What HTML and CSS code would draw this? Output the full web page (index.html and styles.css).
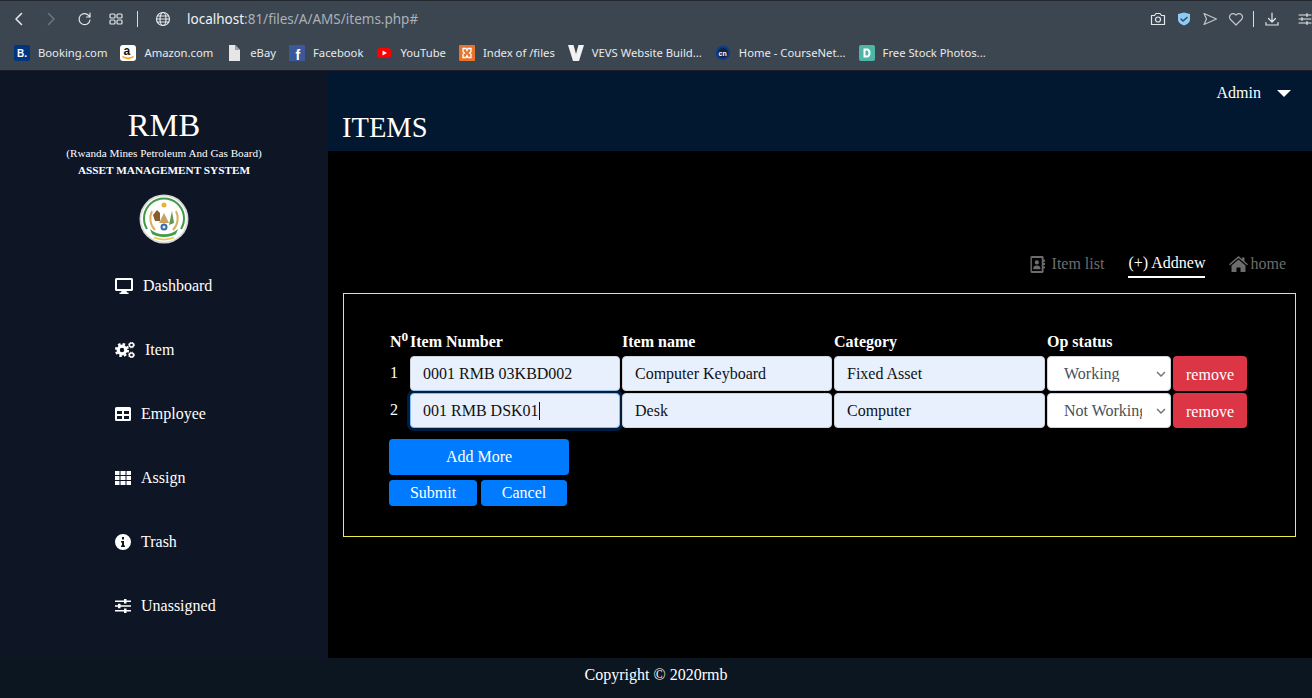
FILE: index.html
```html
<!DOCTYPE html>
<html lang="en">
<head>
  <meta charset="UTF-8">
  <title>Items</title>
  <link rel="stylesheet" href="styles.css">
</head>
<body>
  <div class="browser">
    <div class="toolbar">
      <div class="tool-left">
        <svg class="tb-ico" viewBox="0 0 16 16"><path d="M10.5 2.5 5 8l5.5 5.5" class="ln"/></svg>
        <svg class="tb-ico dim" viewBox="0 0 16 16"><path d="M5.5 2.5 11 8l-5.5 5.5" class="ln"/></svg>
        <svg class="tb-ico reload" viewBox="0 0 16 16"><path d="M13 9a5.5 5.5 0 1 1-1.4-4.6L13 6V2M13 6H9.5" class="ln thin"/></svg>
        <svg class="tb-ico apps" viewBox="0 0 16 16"><g class="ln thin"><rect x="2" y="3" width="5" height="4" rx="1"/><rect x="9" y="3" width="5" height="4" rx="1"/><rect x="2" y="9" width="5" height="4" rx="1"/><rect x="9" y="9" width="5" height="4" rx="1"/></g></svg>
        <span class="tb-sep"></span>
        <svg class="tb-ico globe" viewBox="0 0 16 16"><g class="ln thin"><circle cx="8" cy="8" r="6.5"/><ellipse cx="8" cy="8" rx="3" ry="6.5"/><path d="M1.5 8h13M2.5 5h11M2.5 11h11"/></g></svg>
        <span class="url"><b>localhost</b>:81/files/A/AMS/items.php#</span>
      </div>
      <div class="tool-right">
        <svg class="tb-ico" viewBox="0 0 16 16"><g class="ln thin"><path d="M1.5 4.5h3L6 2.500h4l1.500 2h3v9h-13z"/><circle cx="8" cy="8.500" r="2.500"/></g></svg>
        <svg class="tb-ico" viewBox="0 0 16 16"><path d="M8 1.500 14 3v5.500c0 3-3 5-6 6-3-1-6-3-6-6V3z" fill="#8ccbf7"/><path d="M5 8l2 2 4-3.500" class="ln check"/></svg>
        <svg class="tb-ico" viewBox="0 0 16 16"><path d="M2 2.500 14.500 8 2 13.500 4.500 8z" class="ln thin grey"/></svg>
        <svg class="tb-ico" viewBox="0 0 16 16"><path d="M8 14 2.500 8.500a3.300 3.300 0 0 1 0-4.800 3.500 3.500 0 0 1 5 0l.5.500.5-.5a3.500 3.500 0 0 1 5 0 3.300 3.300 0 0 1 0 4.800z" class="ln thin grey"/></svg>
        <span class="tb-sep"></span>
        <svg class="tb-ico download" viewBox="0 0 16 16"><path d="M8 2v8.500M4.500 7.500 8 11l3.500-3.500M2 11.500V14h12v-2.500" class="ln thin"/></svg>
        <svg class="tb-ico sliders" viewBox="0 0 16 16"><path d="M2 4h12M2 8h12M2 12h12M10 2.500v3M5 6.500v3M10 10.500v3" class="ln thin"/></svg>
      </div>
    </div>
    <div class="bookmarks">
      <span class="bm"><svg viewBox="0 0 16 16"><rect width="16" height="16" rx="2" fill="#003580"/><text x="3" y="12" class="fav-txt">B.</text></svg>Booking.com</span>
      <span class="bm"><svg viewBox="0 0 16 16"><rect width="16" height="16" rx="3" fill="#fff"/><text x="3.500" y="10" class="fav-txt dark">a</text><path d="M2.500 11.500c3 2.500 8 2.500 11 0" stroke="#f90" stroke-width="1.600" fill="none"/></svg>Amazon.com</span>
      <span class="bm"><svg viewBox="0 0 16 16"><path d="M3 0h6l5 5v11H3z" fill="#e6e6e6"/><path d="M9 0l5 5H9z" fill="#9aa0a6"/></svg>eBay</span>
      <span class="bm"><svg viewBox="0 0 16 16"><rect width="16" height="16" fill="#3b5998"/><text x="6.500" y="14.500" class="fav-txt big">f</text></svg>Facebook</span>
      <span class="bm"><svg viewBox="0 0 16 16"><rect x="1" y="3" width="14" height="10" rx="3" fill="#f00"/><path d="M6.500 5.500 11 8l-4.500 2.500z" fill="#fff"/></svg>YouTube</span>
      <span class="bm"><svg viewBox="0 0 16 16"><rect width="16" height="16" rx="1" fill="#e8742a"/><path d="M4 3.500h3l1 2 1-2h3v3.300L10.500 8l1.500 1.200v3.300H9l-1-2-1 2H4V9.200L5.500 8 4 6.800z" fill="none" stroke="#fff" stroke-width="1.300"/></svg>Index of /files</span>
      <span class="bm"><svg viewBox="0 0 16 16"><path d="M0 0h5.500L8 9l2.500-9H16l-5 16H5z" fill="#f2f2f2"/></svg>VEVS Website Build...</span>
      <span class="bm"><svg viewBox="0 0 16 16"><circle cx="8" cy="8" r="7.200" fill="#0b3a8a"/><circle cx="8" cy="8" r="5" fill="#10233f"/><text x="3.500" y="10.500" class="fav-txt small">cn</text></svg>Home - CourseNet...</span>
      <span class="bm"><svg viewBox="0 0 16 16"><rect width="16" height="16" rx="2" fill="#4db6a5"/><path d="M4.500 3.500h4a3.500 4.500 0 0 1 3 4.500 3.500 4.500 0 0 1-3 4.500h-4z" fill="#fff"/><path d="M6.500 5.500h1.700a1.500 2.500 0 0 1 1.300 2.500 1.500 2.500 0 0 1-1.300 2.500H6.500z" fill="#4db6a5"/></svg>Free Stock Photos...</span>
    </div>
  </div>

  <div class="app">
    <aside class="sidebar">
      <div class="brand">
        <div class="brand-name">RMB</div>
        <div class="brand-sub">(Rwanda Mines Petroleum And Gas Board)</div>
        <div class="brand-sys">ASSET MANAGEMENT SYSTEM</div>
        <svg class="emblem" viewBox="0 0 50 50">
          <circle cx="25" cy="25" r="24.500" fill="#d8d8d8"/>
          <circle cx="25" cy="25" r="22.800" fill="#fff"/>
          <path d="M8 35A20 20 0 1 1 42 35" fill="none" stroke="#3f9b45" stroke-width="2"/>
          <circle cx="25" cy="11" r="2.500" fill="#e8b23a"/>
          <path d="M13 17c-3 6-2 14 3 19M37 17c3 6 2 14-3 19" fill="none" stroke="#d8b060" stroke-width="2"/>
          <path d="M14 21l4-5 3 3v8h-5z" fill="#8a5a2b"/>
          <path d="M20 29l5-10 5 10z" fill="#c8a060"/>
          <path d="M33 17l2 12-5 2z" fill="#5c9a52"/>
          <circle cx="25" cy="33" r="3.500" fill="#2f6db0"/>
          <circle cx="25" cy="33" r="1.500" fill="#e8e8e8"/>
          <path d="M11 35c7 7 21 7 28 0l-2 5c-7 4-17 4-24 0z" fill="#3f9b45"/>
          <path d="M15 43.500c6 2.500 14 2.500 20 0" fill="none" stroke="#e8c84a" stroke-width="1.800"/>
        </svg>
      </div>
      <nav class="nav">
        <a class="nav-item"><svg class="ico w18" viewBox="0 0 18 16"><path d="M1.500 0h15A1.500 1.500 0 0 1 18 1.500v10a1.500 1.500 0 0 1-1.500 1.500H11.500l.5 1.500h1.500v1.500h-9v-1.500H6l.5-1.500h-5A1.500 1.500 0 0 1 0 11.500v-10A1.500 1.500 0 0 1 1.500 0zM2 2v9h14V2z" fill-rule="evenodd"/></svg>Dashboard</a>
        <a class="nav-item"><svg class="ico w20" viewBox="0 0 20 16">
          <circle cx="7" cy="8" r="3.800" class="gear-body"/>
          <circle cx="7" cy="8" r="6" class="gear-teeth"/>
          <circle cx="16.500" cy="3" r="2" class="gear-small"/>
          <circle cx="16.500" cy="13" r="2" class="gear-small"/>
          <circle cx="16.500" cy="3" r="2.900" class="gear-small-teeth"/>
          <circle cx="16.500" cy="13" r="2.900" class="gear-small-teeth"/>
        </svg>Item</a>
        <a class="nav-item"><svg class="ico w16" viewBox="0 0 16 14"><path d="M1.500 0h13A1.500 1.500 0 0 1 16 1.500v11a1.500 1.500 0 0 1-1.500 1.500h-13A1.500 1.500 0 0 1 0 12.500v-11A1.500 1.500 0 0 1 1.500 0zM2 4v3h5V4zm7 0v3h5V4zm-7 5v3h5V9zm7 0v3h5V9z" fill-rule="evenodd"/></svg>Employee</a>
        <a class="nav-item"><svg class="ico w16" viewBox="0 0 16 14"><path d="M0 0h4.500v4H0zM5.500 0h5v4h-5zM11.500 0H16v4h-4.500zM0 5h4.500v4H0zM5.500 5h5v4h-5zM11.500 5H16v4h-4.500zM0 10h4.500v4H0zM5.500 10h5v4h-5zM11.500 10H16v4h-4.500z"/></svg>Assign</a>
        <a class="nav-item"><svg class="ico w16" viewBox="0 0 16 16"><path d="M8 0a8 8 0 1 1 0 16A8 8 0 0 1 8 0zM7 3v2.500h2V3zM6 7v1.500h1v3H6V13h4v-1.500H9V7z" fill-rule="evenodd"/></svg>Trash</a>
        <a class="nav-item"><svg class="ico w16" viewBox="0 0 16 14"><path d="M0 1.500h9V0h2.500v1.500H16v1.500h-4.500v1.500H9V3H0zM0 6.250h3V4.800h2.500v1.450H16v1.500H5.500V9.200H3V7.750H0zM0 11h9V9.500h2.500V11H16v1.500h-4.500V14H9v-1.500H0z"/></svg>Unassigned</a>
      </nav>
    </aside>

    <div class="content">
      <header class="topbar">
        <div class="admin">Admin<span class="caret"></span></div>
        <h1>ITEMS</h1>
      </header>
      <main class="main">
        <div class="tabs">
          <a class="tab"><svg class="tab-ico" viewBox="0 0 16 18"><path d="M2 0h11a1.500 1.500 0 0 1 1.500 1.500V4H16v2h-1.500v1.500H16v2h-1.500V11H16v2h-1.500v3.500A1.500 1.500 0 0 1 13 18H2a1.500 1.500 0 0 1-1.500-1.500v-15A1.500 1.500 0 0 1 2 0zm0 2v14h10.500V2zm5.300 2.500a2.300 2.300 0 1 1 0 4.600 2.300 2.300 0 0 1 0-4.600zM3.500 13c0-2 1.500-3 3.800-3s3.800 1 3.800 3v1h-7.600z" fill-rule="evenodd"/></svg>Item list</a>
          <a class="tab active">(+) Addnew</a>
          <a class="tab home"><svg class="tab-ico wide" viewBox="0 0 19 16"><path d="M9.500 0 13 3V1.500h2.500v3.700L19 8.200l-1 1.100-8.500-7.300L1 9.300 0 8.200zM9.500 3.500 16.500 9.500V16H11.500v-4.500h-4V16H2.500V9.500z"/></svg>home</a>
        </div>
        <form class="form-box">
          <div class="item-grid">
            <div class="hd no">N<sup>0</sup></div>
            <div class="hd">Item Number</div>
            <div class="hd">Item name</div>
            <div class="hd">Category</div>
            <div class="hd">Op status</div>
            <div></div>

            <div class="num">1</div>
            <input class="field" type="text" value="0001 RMB 03KBD002">
            <input class="field" type="text" value="Computer Keyboard">
            <input class="field" type="text" value="Fixed Asset">
            <select class="status"><option>Working</option></select>
            <button type="button" class="btn-remove">remove</button>

            <div class="num">2</div>
            <div class="field focused">001 RMB DSK01<span class="cursor"></span></div>
            <input class="field" type="text" value="Desk">
            <input class="field" type="text" value="Computer">
            <select class="status"><option>Not Working</option></select>
            <button type="button" class="btn-remove">remove</button>
          </div>
          <button type="button" class="btn-blue btn-add">Add More</button>
          <div class="form-btns">
            <button type="button" class="btn-blue btn-submit">Submit</button>
            <button type="button" class="btn-blue btn-cancel">Cancel</button>
          </div>
        </form>
      </main>
    </div>
  </div>

  <footer class="footer">Copyright © 2020rmb</footer>
</body>
</html>
```

FILE: styles.css
```css
* { box-sizing: border-box; }

html, body {
  margin: 0;
  height: 698px;
  overflow: hidden;
}

body {
  font-family: "Liberation Serif", serif;
  font-size: 16px;
  color: white;
  background: #000;
  display: flex;
  flex-direction: column;
}

/* browser chrome */
.browser {
  height: 71px;
  background: #3b4651;
  border-top: 1px solid #23282e;
  border-bottom: 1px solid #1c2026;
  font-family: "Noto Sans", sans-serif;
  color: #e8eaed;
}

.toolbar {
  height: 36px;
  display: flex;
  align-items: center;
  justify-content: space-between;
  padding-left: 11px;
}

.tool-left, .tool-right {
  display: flex;
  align-items: center;
}

.tb-ico {
  width: 16px;
  height: 16px;
  margin-right: 16px;
  flex: none;
}

.tb-ico.reload { margin-left: 2px; margin-right: 15px; }
.tb-ico.apps { margin-right: 13px; }
.tb-ico.globe { margin-right: 16px; }

.tool-right .tb-ico { margin-right: 10px; }
.tool-right .download { margin-right: 17px; }
.tool-right .sliders { margin-right: -1px; }

.ln {
  fill: none;
  stroke: #e4e7ea;
  stroke-width: 1.6;
  stroke-linecap: round;
  stroke-linejoin: round;
}
.ln.thin { stroke-width: 1.2; }
g.ln { stroke-width: 1.2; }
.ln.grey { stroke: #c2c6ca; }
.ln.check { stroke: #3b4651; stroke-width: 1.5; }
.dim .ln { stroke: #6b747d; }

.tb-sep {
  width: 1px;
  height: 16px;
  background: #d8dbde;
  margin-right: 17px;
}

.tool-right .tb-sep { margin: 0 10px 0 -1px; }

.url {
  font-size: 13.5px;
  color: #aab1b8;
}
.url b { font-weight: normal; color: #f1f3f4; }

.bookmarks {
  height: 32px;
  display: flex;
  align-items: center;
  padding: 0 0 1px 14px;
  font-size: 11.25px;
  gap: 13px;
}

.bm {
  display: flex;
  align-items: center;
  gap: 8px;
  white-space: nowrap;
}

.bm svg { width: 16px; height: 16px; flex: none; }

.fav-txt {
  font: bold 10px "Liberation Sans", sans-serif;
  fill: #fff;
}
.fav-txt.dark { fill: #111; font-size: 12px; }
.fav-txt.big { font-size: 14px; }
.fav-txt.small { font-size: 7px; }

/* app */
.app {
  flex: 1;
  display: flex;
  min-height: 0;
}

.sidebar {
  width: 328px;
  flex: none;
  background: #0e1525;
}

.brand {
  display: flex;
  flex-direction: column;
  align-items: center;
}

.brand-name {
  font-size: 32.5px;
  line-height: 38px;
  margin-top: 35px;
}

.brand-sub {
  font-size: 11.2px;
  line-height: 14px;
  margin-top: 2px;
}

.brand-sys {
  font-size: 11.25px;
  font-weight: bold;
  line-height: 14px;
  margin-top: 3px;
}

.emblem {
  width: 50px;
  height: 50px;
  margin-top: 17px;
}

.nav {
  display: flex;
  flex-direction: column;
  margin-top: 10px;
}

.nav-item {
  height: 64px;
  display: flex;
  align-items: center;
  gap: 10px;
  padding-left: 115px;
  font-size: 16px;
}

.ico { fill: white; flex: none; }
.w18 { width: 18px; height: 16px; }
.w20 { width: 20px; height: 16px; }
.w16 { width: 16px; height: 16px; }

.gear-body, .gear-small, .gear-teeth, .gear-small-teeth { fill: none; stroke: white; }
.gear-body { stroke-width: 3.2; }
.gear-teeth { stroke-width: 2.2; stroke-dasharray: 2.5 2.2; }
.gear-small { stroke-width: 1.4; }
.gear-small-teeth { stroke-width: 1; stroke-dasharray: 1.3 1; }

.content {
  flex: 1;
  display: flex;
  flex-direction: column;
  min-width: 0;
}

.topbar {
  height: 80px;
  background: #021730;
  padding: 13px 21px 0 14px;
  display: flex;
  flex-direction: column;
}

.admin {
  align-self: flex-end;
  font-size: 16px;
  line-height: 18px;
  display: flex;
  align-items: center;
}

.caret {
  width: 0;
  height: 0;
  border-left: 7px solid transparent;
  border-right: 7px solid transparent;
  border-top: 7px solid white;
  margin-left: 16px;
}

h1 {
  font-size: 28.5px;
  font-weight: normal;
  line-height: 34px;
  margin: 9px 0 0;
}

.main {
  flex: 1;
  background: #000;
  padding: 0 16px 0 15px;
}

.tabs {
  display: flex;
  justify-content: flex-end;
  align-items: flex-start;
  gap: 24px;
  margin-top: 99px;
  padding-right: 10px;
  height: 43px;
}

.tab {
  font-size: 16px;
  color: #6c6c6c;
  display: flex;
  align-items: center;
  height: 28px;
  white-space: nowrap;
}

.tab.active {
  color: white;
  border-bottom: 2px solid white;
}

.tab-ico {
  width: 15px;
  height: 17px;
  fill: #6c6c6c;
  margin-right: 7px;
}

.tab-ico.wide { width: 19px; height: 16px; margin-right: 2px; }

.form-box {
  border: 1px solid #ecec4a;
  height: 244px;
  padding: 38px 45px 0;
}

.item-grid {
  display: grid;
  grid-template-columns: 19px 210px 210px 211px 124px 74px;
  grid-template-rows: 22px 35px 35px;
  gap: 2px;
}

.hd {
  font-weight: bold;
  font-size: 16px;
  line-height: 20px;
  white-space: nowrap;
}

.hd sup { line-height: 0; }
.no { padding-left: 1px; }

.num {
  font-size: 16px;
  padding: 8px 0 0 1px;
}

.field {
  font: 16px "Liberation Serif", serif;
  background: #e8f0fe;
  color: #111;
  border: 1px solid #ced4da;
  border-radius: 4px;
  padding: 0 12px;
  width: 100%;
  height: 35px;
  line-height: 33px;
  outline: none;
}

.field.focused {
  border-color: #80bdff;
  box-shadow: 0 0 0 3px rgba(0,123,255,.25);
}

.cursor {
  display: inline-block;
  width: 1px;
  height: 18px;
  background: #111;
  vertical-align: -4px;
}

.status {
  font: 16px "Liberation Serif", serif;
  color: #495057;
  background: white url("data:image/svg+xml,%3Csvg xmlns='http://www.w3.org/2000/svg' width='10' height='6'%3E%3Cpath d='M1 1l4 4 4-4' fill='none' stroke='%23777' stroke-width='1.500'/%3E%3C/svg%3E") no-repeat right 4px center;
  border: 1px solid #ced4da;
  border-radius: 4px;
  padding: 0 28px 0 16px;
  width: 100%;
  height: 35px;
  appearance: none;
}

.btn-remove {
  font: 16px "Liberation Serif", serif;
  background: #dc3545;
  color: white;
  border: none;
  border-radius: 4px;
  padding: 3px 0 0;
}

.btn-blue {
  font: 16px "Liberation Serif", serif;
  background: #007bff;
  color: white;
  border: none;
  border-radius: 4px;
  display: block;
}

.btn-add {
  width: 180px;
  height: 36px;
  margin-top: 11px;
  padding: 0;
}

.form-btns {
  display: flex;
  gap: 4px;
  margin-top: 5px;
}

.btn-submit { width: 88px; height: 26px; padding: 0; }
.btn-cancel { width: 86px; height: 26px; padding: 0; }

.footer {
  height: 40px;
  flex: none;
  background: #0b1620;
  text-align: center;
  font-size: 16px;
  line-height: 34px;
}
```
